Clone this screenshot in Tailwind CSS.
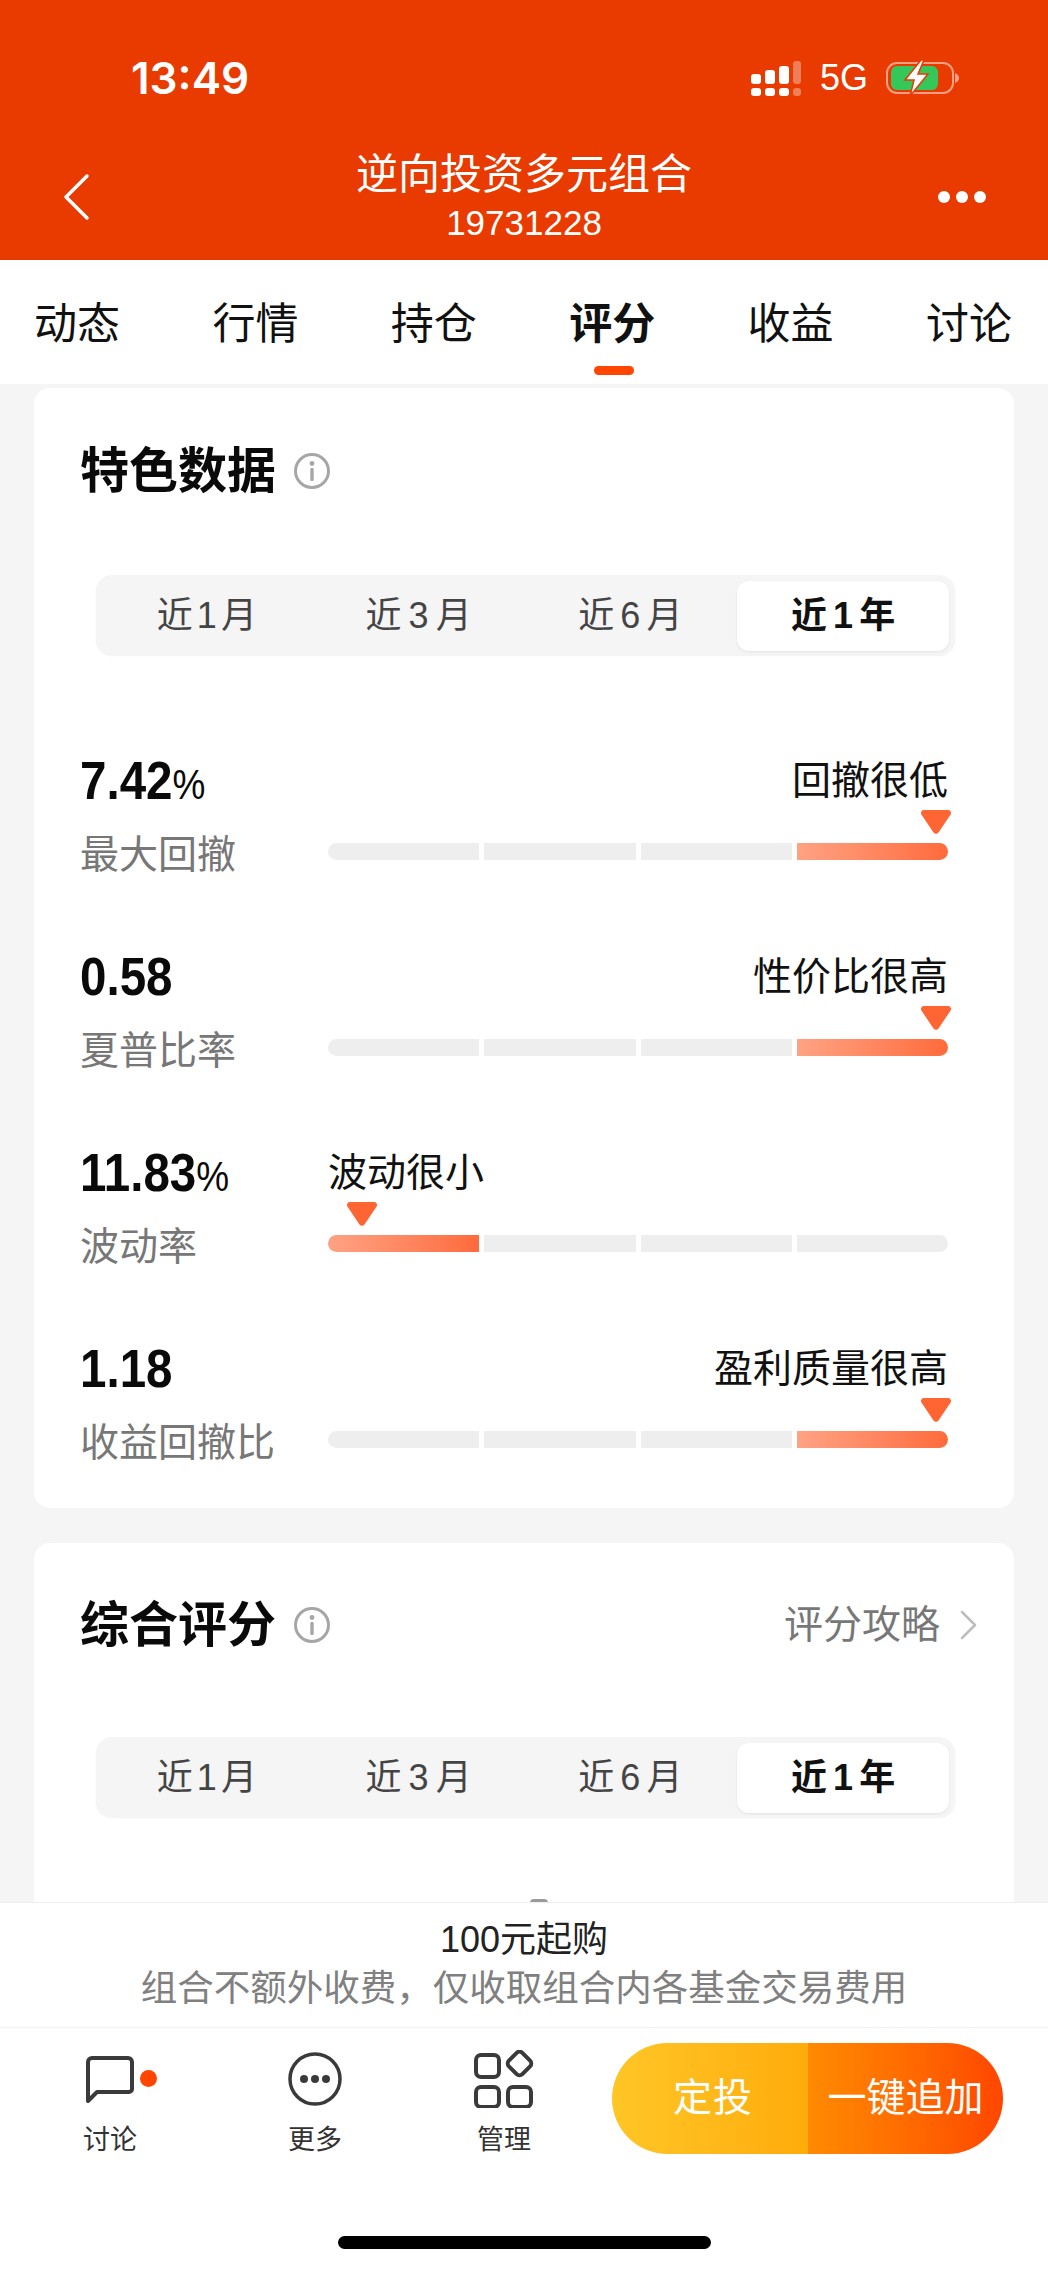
<!DOCTYPE html>
<html lang="zh-CN">
  <head>
    <meta charset="UTF-8" />
    <title>逆向投资多元组合</title>
    <script src="https://cdn.jsdelivr.net/npm/@tailwindcss/browser@4"></script>
  </head>
  <body class="font-['Liberation_Sans','Noto_Sans_CJK_SC',sans-serif]">
    <div class="flex h-[2271px] w-[1048px] flex-col overflow-hidden bg-white">
      <!-- Header -->
      <header class="h-[260px] shrink-0 bg-[#e93a00] pt-[48px] text-white">
        <div class="flex h-[60px] items-center justify-between pr-[88px] pl-[131px]">
          <span class="font-['Inter'] text-[44px] leading-[60px] font-semibold">13:49</span>
          <div class="flex items-center">
            <svg width="52" height="38" viewBox="0 0 52 38" class="mr-[19px]">
              <g fill="#fff">
                <rect x="2" y="15" width="10" height="10" rx="3" />
                <rect x="16" y="11" width="10" height="14" rx="3" />
                <rect x="30" y="7" width="10" height="18" rx="3" />
                <rect x="2" y="29" width="10" height="8" rx="3" />
                <rect x="16" y="29" width="10" height="8" rx="3" />
                <rect x="30" y="29" width="10" height="8" rx="3" />
              </g>
              <g fill="#fff" fill-opacity="0.35">
                <rect x="44" y="2" width="8" height="23" rx="3" />
                <rect x="44" y="29" width="8" height="8" rx="3" />
              </g>
            </svg>
            <span class="mr-[18px] text-[36px] leading-[60px]">5G</span>
            <svg width="74" height="36" viewBox="0 0 74 36">
              <rect x="1" y="3" width="66" height="30" rx="10" fill="none" stroke="#ff9f85" stroke-width="2" />
              <rect x="5" y="6" width="47" height="24" rx="6" fill="#34c759" />
              <path d="M69 13 C72 14 73 16 73 18 C73 20 72 22 69 23 Z" fill="#ff9f85" />
              <path d="M35 0 L19 20 H28 L24 36 L42 14 H32 L38 0 Z" fill="#fff" stroke="#e93a00" stroke-width="1.5" />
            </svg>
          </div>
        </div>
        <div class="mt-[42px] grid grid-cols-[1fr_auto_1fr] items-center">
          <div class="pl-[62px]">
            <svg width="28" height="48" viewBox="0 0 28 48" fill="none" stroke="#fff" stroke-width="3.5" stroke-linecap="round" stroke-linejoin="round">
              <path d="M25 3 L4 24 L25 45" />
            </svg>
          </div>
          <div class="flex flex-col items-center">
            <h1 class="text-[42px] leading-[50px]">逆向投资多元组合</h1>
            <p class="mt-[3px] text-[35px] leading-[40px]">19731228</p>
          </div>
          <div class="flex justify-end gap-[6px] pr-[62px]">
            <span class="size-[12px] rounded-full bg-white"></span>
            <span class="size-[12px] rounded-full bg-white"></span>
            <span class="size-[12px] rounded-full bg-white"></span>
          </div>
        </div>
      </header>

      <!-- Tabs -->
      <nav class="relative flex h-[124px] shrink-0 items-start justify-between bg-white pt-[39px] pr-[36px] pl-[34px] text-[43px] leading-[50px] text-[#111]">
        <span>动态</span>
        <span>行情</span>
        <span>持仓</span>
        <span class="relative font-bold">
          评分
          <span class="absolute top-[67px] left-[25px] h-[9px] w-[40px] rounded-full bg-[#ff4500]"></span>
        </span>
        <span>收益</span>
        <span>讨论</span>
      </nav>

      <!-- Scrolling content -->
      <main class="relative min-h-0 flex-1 overflow-hidden bg-[#f5f5f5] px-[34px] pt-[4px]">
        <section class="rounded-[16px] bg-white pt-[53px] pb-[40px] pl-[46px]">
          <div class="flex h-[60px] items-center">
            <h2 class="text-[49px] leading-[60px] font-bold text-[#0a0a0a]">特色数据</h2>
            <svg width="38" height="38" viewBox="0 0 38 38" class="ml-[17px]">
              <circle cx="19" cy="19" r="16.5" fill="none" stroke="#a6a6a6" stroke-width="3" />
              <circle cx="19" cy="11.5" r="2.4" fill="#a6a6a6" />
              <rect x="17.3" y="16" width="3.4" height="13" rx="1" fill="#a6a6a6" />
            </svg>
          </div>
          <div class="mt-[74px] ml-[16px] grid h-[80px] w-[859px] grid-cols-4 rounded-[16px] bg-[#f5f5f5] px-[6px] pt-[6px] pb-[4px] text-[36px] text-[#444] shadow-[0_1px_2px_rgba(0,0,0,0.06)]">
            <div class="flex items-center justify-center pl-[2px] tracking-[4px]">近1月</div>
            <div class="flex items-center justify-center pl-[5px] tracking-[7px]">近3月</div>
            <div class="flex items-center justify-center pl-[4px] tracking-[6px]">近6月</div>
            <div class="flex items-center justify-center rounded-[12px] bg-white pl-[6px] font-bold tracking-[6px] text-[#111] shadow-[0_1px_3px_rgba(0,0,0,0.08)]">近1年</div>
          </div>

          <div class="mt-[95px] flex flex-col gap-[66px]">
            <div class="flex">
              <div class="w-[248px] shrink-0">
                <div class="origin-left scale-x-[.88] text-[54px] leading-[60px] font-bold text-[#0a0a0a]">7.42<span class="text-[42px] leading-none font-normal">%</span></div>
                <div class="mt-[20px] text-[39px] leading-[50px] text-[#777]">最大回撤</div>
              </div>
              <div class="flex w-[620px] flex-col">
                <div class="pt-[2px] text-right text-[39px] leading-[58px] text-[#111]">回撤很低</div>
                <svg width="30" height="24" viewBox="0 0 30 24" class="-mr-[3px] self-end"><path d="M3 0 H27 A3 3 0 0 1 29.6 4.5 L17.5 22.5 A3 3 0 0 1 12.5 22.5 L.4 4.5 A3 3 0 0 1 3 0 Z" fill="#ff6433" /></svg>
                <div class="mt-[9px] flex h-[17px] gap-[5px]">
                  <div class="flex-1 rounded-l-full bg-[#eeeeee]"></div>
                  <div class="flex-1 bg-[#eeeeee]"></div>
                  <div class="flex-1 bg-[#eeeeee]"></div>
                  <div class="flex-1 rounded-r-full bg-linear-to-r from-[#ffa283] to-[#ff6a3a]"></div>
                </div>
              </div>
            </div>

            <div class="flex">
              <div class="w-[248px] shrink-0">
                <div class="origin-left scale-x-[.88] text-[54px] leading-[60px] font-bold text-[#0a0a0a]">0.58</div>
                <div class="mt-[20px] text-[39px] leading-[50px] text-[#777]">夏普比率</div>
              </div>
              <div class="flex w-[620px] flex-col">
                <div class="pt-[2px] text-right text-[39px] leading-[58px] text-[#111]">性价比很高</div>
                <svg width="30" height="24" viewBox="0 0 30 24" class="-mr-[3px] self-end"><path d="M3 0 H27 A3 3 0 0 1 29.6 4.5 L17.5 22.5 A3 3 0 0 1 12.5 22.5 L.4 4.5 A3 3 0 0 1 3 0 Z" fill="#ff6433" /></svg>
                <div class="mt-[9px] flex h-[17px] gap-[5px]">
                  <div class="flex-1 rounded-l-full bg-[#eeeeee]"></div>
                  <div class="flex-1 bg-[#eeeeee]"></div>
                  <div class="flex-1 bg-[#eeeeee]"></div>
                  <div class="flex-1 rounded-r-full bg-linear-to-r from-[#ffa283] to-[#ff6a3a]"></div>
                </div>
              </div>
            </div>

            <div class="flex">
              <div class="w-[248px] shrink-0">
                <div class="origin-left scale-x-[.88] text-[54px] leading-[60px] font-bold text-[#0a0a0a]">11.83<span class="text-[42px] leading-none font-normal">%</span></div>
                <div class="mt-[20px] text-[39px] leading-[50px] text-[#777]">波动率</div>
              </div>
              <div class="flex w-[620px] flex-col">
                <div class="pt-[2px] text-[39px] leading-[58px] text-[#111]">波动很小</div>
                <svg width="30" height="24" viewBox="0 0 30 24" class="ml-[19px]"><path d="M3 0 H27 A3 3 0 0 1 29.6 4.5 L17.5 22.5 A3 3 0 0 1 12.5 22.5 L.4 4.5 A3 3 0 0 1 3 0 Z" fill="#ff6433" /></svg>
                <div class="mt-[9px] flex h-[17px] gap-[5px]">
                  <div class="flex-1 rounded-l-full bg-linear-to-r from-[#ffa283] to-[#ff6a3a]"></div>
                  <div class="flex-1 bg-[#eeeeee]"></div>
                  <div class="flex-1 bg-[#eeeeee]"></div>
                  <div class="flex-1 rounded-r-full bg-[#eeeeee]"></div>
                </div>
              </div>
            </div>

            <div class="flex">
              <div class="w-[248px] shrink-0">
                <div class="origin-left scale-x-[.88] text-[54px] leading-[60px] font-bold text-[#0a0a0a]">1.18</div>
                <div class="mt-[20px] text-[39px] leading-[50px] text-[#777]">收益回撤比</div>
              </div>
              <div class="flex w-[620px] flex-col">
                <div class="pt-[2px] text-right text-[39px] leading-[58px] text-[#111]">盈利质量很高</div>
                <svg width="30" height="24" viewBox="0 0 30 24" class="-mr-[3px] self-end"><path d="M3 0 H27 A3 3 0 0 1 29.6 4.5 L17.5 22.5 A3 3 0 0 1 12.5 22.5 L.4 4.5 A3 3 0 0 1 3 0 Z" fill="#ff6433" /></svg>
                <div class="mt-[9px] flex h-[17px] gap-[5px]">
                  <div class="flex-1 rounded-l-full bg-[#eeeeee]"></div>
                  <div class="flex-1 bg-[#eeeeee]"></div>
                  <div class="flex-1 bg-[#eeeeee]"></div>
                  <div class="flex-1 rounded-r-full bg-linear-to-r from-[#ffa283] to-[#ff6a3a]"></div>
                </div>
              </div>
            </div>
          </div>
        </section>

        <section class="relative mt-[35px] h-[500px] rounded-[16px] bg-white pt-[52px] pl-[46px]">
          <div class="flex h-[60px] items-center pr-[36px]">
            <h2 class="text-[49px] leading-[60px] font-bold text-[#0a0a0a]">综合评分</h2>
            <svg width="38" height="38" viewBox="0 0 38 38" class="ml-[17px]">
              <circle cx="19" cy="19" r="16.5" fill="none" stroke="#a6a6a6" stroke-width="3" />
              <circle cx="19" cy="11.5" r="2.4" fill="#a6a6a6" />
              <rect x="17.3" y="16" width="3.4" height="13" rx="1" fill="#a6a6a6" />
            </svg>
            <span class="ml-auto text-[39px] leading-[60px] text-[#777]">评分攻略</span>
            <svg width="18" height="30" viewBox="0 0 18 30" fill="none" stroke="#bdbdbd" stroke-width="2.5" stroke-linecap="round" stroke-linejoin="round" class="ml-[20px]">
              <path d="M2 2 L15 15 L2 28" />
            </svg>
          </div>
          <div class="mt-[82px] ml-[16px] grid h-[80px] w-[859px] grid-cols-4 rounded-[16px] bg-[#f5f5f5] px-[6px] pt-[6px] pb-[4px] text-[36px] text-[#444] shadow-[0_1px_2px_rgba(0,0,0,0.06)]">
            <div class="flex items-center justify-center pl-[2px] tracking-[4px]">近1月</div>
            <div class="flex items-center justify-center pl-[5px] tracking-[7px]">近3月</div>
            <div class="flex items-center justify-center pl-[4px] tracking-[6px]">近6月</div>
            <div class="flex items-center justify-center rounded-[12px] bg-white pl-[6px] font-bold tracking-[6px] text-[#111] shadow-[0_1px_3px_rgba(0,0,0,0.08)]">近1年</div>
          </div>
          <!-- top edge of the gauge that scrolls in below the fold -->
          <div class="absolute top-[356px] left-[496px] h-[4px] w-[18px] rounded-t-full bg-[#9a9a9a]"></div>
        </section>
      </main>

      <!-- Footer -->
      <footer class="shrink-0 border-t border-[#eeeeee] bg-white pb-[22px]">
        <div class="border-b border-[#f2f2f2] pt-[15px] pb-[16px] text-center">
          <p class="text-[36px] leading-[44px] text-[#222]">100元起购</p>
          <p class="mt-[5px] text-[36.5px] leading-[44px] text-[#808080]">组合不额外收费，仅收取组合内各基金交易费用</p>
        </div>
        <div class="flex h-[208px] items-start">
          <div class="flex w-[220px] flex-col items-center pt-[22px]">
            <div class="relative flex h-[58px] items-center">
              <svg width="48" height="47" viewBox="0 0 48 47" fill="none" stroke="#3a3a3a" stroke-width="4" stroke-linejoin="round">
                <path d="M2 45 V6 A4 4 0 0 1 6 2 H42 A4 4 0 0 1 46 6 V33 A3 3 0 0 1 43 36 H11 Z" />
              </svg>
              <span class="absolute top-[20px] -right-[23px] size-[17px] rounded-full bg-[#ff4500]"></span>
            </div>
            <span class="mt-[14px] text-[27px] leading-[36px] text-[#333]">讨论</span>
          </div>
          <div class="flex w-[190px] flex-col items-center pt-[22px]">
            <div class="flex h-[58px] items-center">
              <svg width="54" height="54" viewBox="0 0 54 54">
                <circle cx="27" cy="27" r="25" fill="none" stroke="#3a3a3a" stroke-width="3.5" />
                <circle cx="16" cy="27" r="4" fill="#3a3a3a" />
                <circle cx="27" cy="27" r="4" fill="#3a3a3a" />
                <circle cx="38" cy="27" r="4" fill="#3a3a3a" />
              </svg>
            </div>
            <span class="mt-[14px] text-[27px] leading-[36px] text-[#333]">更多</span>
          </div>
          <div class="flex w-[188px] flex-col items-center pt-[22px]">
            <svg width="60" height="58" viewBox="0 0 60 58" fill="none" stroke="#3a3a3a" stroke-width="4">
              <rect x="2" y="5" width="23" height="22" rx="5" />
              <rect x="2" y="37" width="23" height="20" rx="5" />
              <rect x="34" y="37" width="23" height="20" rx="5" />
              <rect x="36" y="4" width="19" height="19" rx="4" transform="rotate(45 45.5 13.5)" />
            </svg>
            <span class="mt-[14px] text-[27px] leading-[36px] text-[#333]">管理</span>
          </div>
          <div class="mt-[15px] ml-[14px] flex h-[111px] w-[391px] overflow-hidden rounded-full text-[39px] text-white">
            <div class="flex w-[196px] items-center justify-center bg-linear-to-r from-[#ffc625] to-[#ffac0a] pl-[6px] tracking-[1px]">定投</div>
            <div class="flex flex-1 items-center justify-center bg-linear-to-r from-[#ff8a00] to-[#ff4500]">一键追加</div>
          </div>
        </div>
        <div class="mx-auto h-[13px] w-[373px] rounded-full bg-black"></div>
      </footer>
    </div>
  </body>
</html>
